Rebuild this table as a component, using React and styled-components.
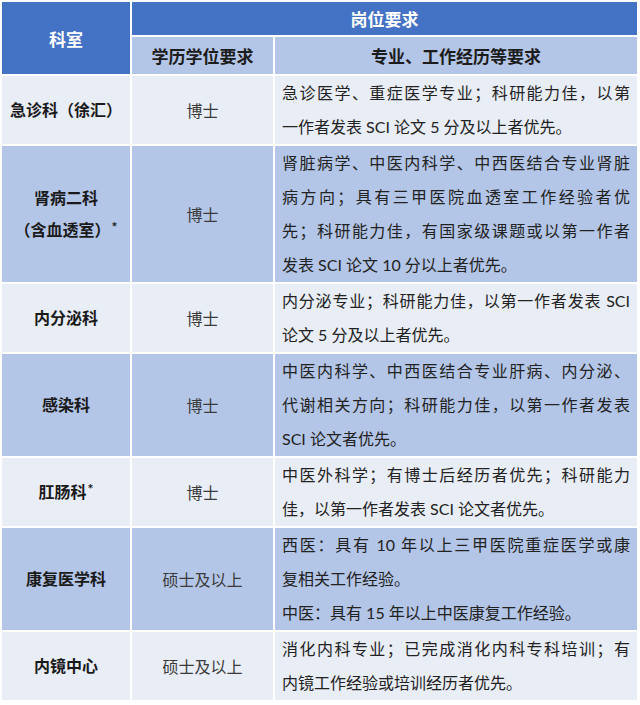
import styled, { createGlobalStyle } from 'styled-components'

const Global = createGlobalStyle`
  html, body {
    margin: 0;
    padding: 0;
    background: #ffffff;
  }
  body {
    font-family: Lato, "Noto Sans CJK SC", sans-serif;
    color: #222222;
  }
`

const Table = styled.table`
  width: 639px;
  table-layout: fixed;
  border-collapse: separate;
  border-spacing: 2px;
  font-size: 16px;
`

const HeadCell = styled.th`
  background: ${p => (p.$tone === 'dark' ? '#4472c4' : '#b4c6e7')};
  color: ${p => (p.$tone === 'dark' ? '#ffffff' : '#1c1c1c')};
  font-size: 17px;
  font-weight: 700;
  text-align: center;
  vertical-align: middle;
  padding: 0;
  height: ${p => p.$h || 'auto'};
`

const Row = styled.tr`
  background: ${p => (p.$alt ? '#b4c6e7' : '#e9edf6')};
`

const DeptCell = styled.td`
  font-weight: 700;
  color: #1a1a1a;
  text-align: center;
  vertical-align: middle;
  line-height: 32px;
  padding: 0;
`

const DeptLine = styled.span`
  display: block;
  white-space: nowrap;
  text-align: center;
`

const DegreeCell = styled.td`
  color: #3a3a3a;
  text-align: center;
  vertical-align: middle;
  padding: 0;
`

const DetailCell = styled.td`
  vertical-align: middle;
  padding: 0 7px;
  line-height: 34px;
  color: #222222;
`

const Line = styled.span`
  display: block;
  white-space: nowrap;
  text-align: ${p => (p.$last ? 'left' : 'justify')};
  text-align-last: ${p => (p.$last ? 'left' : 'justify')};
`

const Star = styled.sup`
  font-size: 14px;
  font-weight: 700;
  vertical-align: 4px;
  line-height: 0;
  margin-left: 1px;
`

const rows = [
  {
    dept: ['急诊科（徐汇）'],
    degree: '博士',
    detail: [['急诊医学、重症医学专业；科研能力佳，以第', '一作者发表 SCI 论文 5 分及以上者优先。']]
  },
  {
    dept: ['肾病二科', '（含血透室）'],
    star: true,
    degree: '博士',
    detail: [
      [
        '肾脏病学、中医内科学、中西医结合专业肾脏',
        '病方向；具有三甲医院血透室工作经验者优',
        '先；科研能力佳，有国家级课题或以第一作者',
        '发表 SCI 论文 10 分以上者优先。'
      ]
    ]
  },
  {
    dept: ['内分泌科'],
    degree: '博士',
    detail: [['内分泌专业；科研能力佳，以第一作者发表 SCI', '论文 5 分及以上者优先。']]
  },
  {
    dept: ['感染科'],
    degree: '博士',
    detail: [
      ['中医内科学、中西医结合专业肝病、内分泌、', '代谢相关方向；科研能力佳，以第一作者发表', 'SCI 论文者优先。']
    ]
  },
  {
    dept: ['肛肠科'],
    star: true,
    degree: '博士',
    detail: [['中医外科学；有博士后经历者优先；科研能力', '佳，以第一作者发表 SCI 论文者优先。']]
  },
  {
    dept: ['康复医学科'],
    degree: '硕士及以上',
    detail: [
      ['西医：具有 10 年以上三甲医院重症医学或康', '复相关工作经验。'],
      ['中医：具有 15 年以上中医康复工作经验。']
    ]
  },
  {
    dept: ['内镜中心'],
    degree: '硕士及以上',
    detail: [['消化内科专业；已完成消化内科专科培训；有', '内镜工作经验或培训经历者优先。']]
  }
]

export default function App() {
  return (
    <>
      <Global />
      <Table>
        <colgroup>
          <col style={{ width: 128 }} />
          <col style={{ width: 141 }} />
          <col style={{ width: 362 }} />
        </colgroup>
        <thead>
          <tr>
            <HeadCell $tone="dark" rowSpan={2}>
              科室
            </HeadCell>
            <HeadCell $tone="dark" colSpan={2} $h="33px">
              岗位要求
            </HeadCell>
          </tr>
          <tr>
            <HeadCell $h="37px">学历学位要求</HeadCell>
            <HeadCell $h="37px">专业、工作经历等要求</HeadCell>
          </tr>
        </thead>
        <tbody>
          {rows.map((r, i) => (
            <Row key={i} $alt={i % 2 === 1}>
              <DeptCell>
                {r.dept.map((d, j) => (
                  <DeptLine key={j}>
                    {d}
                    {r.star && j === r.dept.length - 1 ? <Star>*</Star> : null}
                  </DeptLine>
                ))}
              </DeptCell>
              <DegreeCell>{r.degree}</DegreeCell>
              <DetailCell>
                {r.detail.map((para, k) =>
                  para.map((ln, j) => (
                    <Line key={k + '-' + j} $last={j === para.length - 1}>
                      {ln}
                    </Line>
                  ))
                )}
              </DetailCell>
            </Row>
          ))}
        </tbody>
      </Table>
    </>
  )
}
